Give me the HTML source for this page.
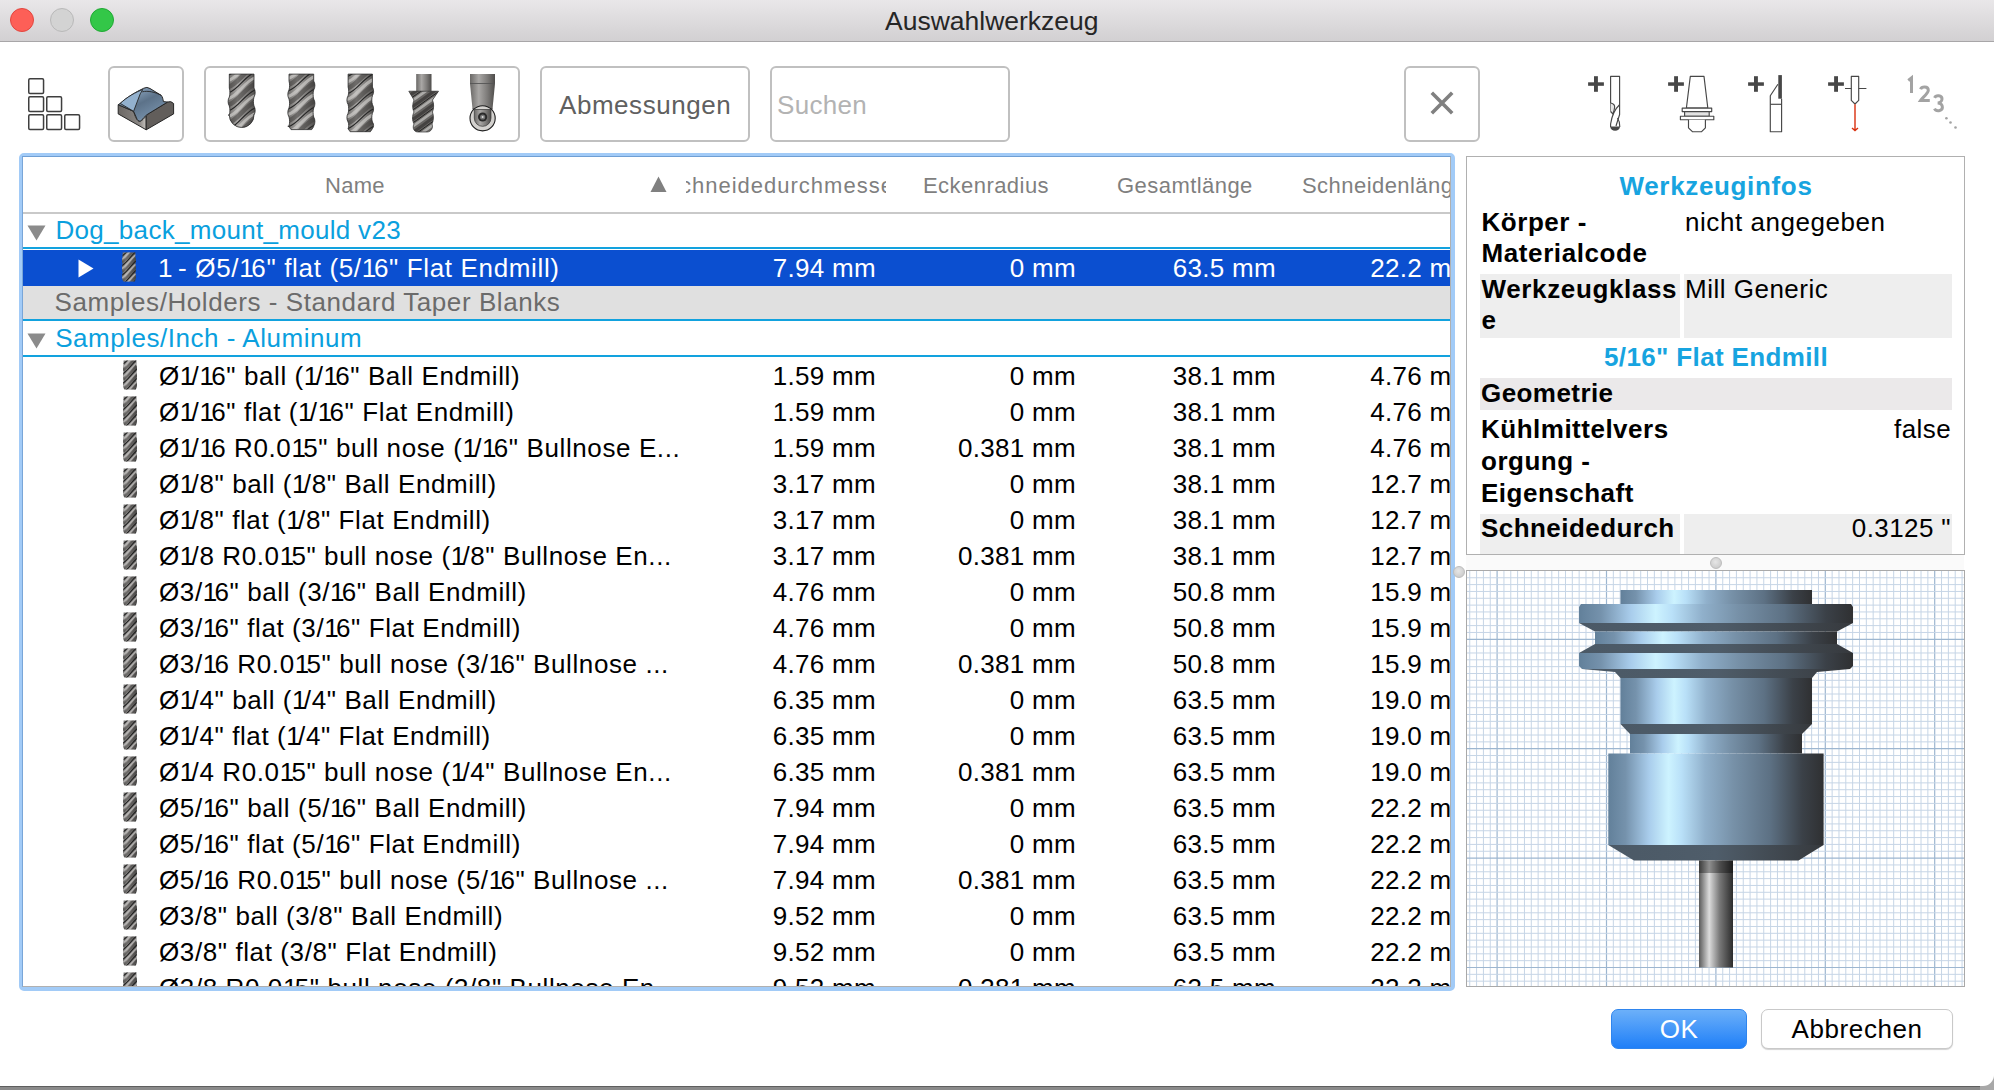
<!DOCTYPE html><html><head><meta charset="utf-8"><style>
*{margin:0;padding:0;box-sizing:border-box}
html,body{width:1994px;height:1090px;overflow:hidden;background:#fff;font-family:"Liberation Sans",sans-serif}
.a{position:absolute}
.t{position:absolute;font-size:26px;line-height:36px;height:36px;white-space:pre;color:#000}
.r{text-align:right}
.ti{position:absolute;width:14px;height:30px}
</style></head><body>
<svg width="0" height="0" style="position:absolute">
<defs>
<linearGradient id="gsteel" x1="0" x2="1" y1="0" y2="0">
<stop offset="0" stop-color="#62809a"/><stop offset="0.08" stop-color="#7592ac"/>
<stop offset="0.19" stop-color="#a9cdec"/><stop offset="0.28" stop-color="#cdf3ff"/>
<stop offset="0.34" stop-color="#b9e0f8"/><stop offset="0.45" stop-color="#90b0cb"/>
<stop offset="0.58" stop-color="#7791a8"/><stop offset="0.75" stop-color="#5d7184"/>
<stop offset="0.9" stop-color="#3b4148"/><stop offset="1" stop-color="#2f3032"/></linearGradient>
<linearGradient id="gdark" x1="0" x2="1" y1="0" y2="0">
<stop offset="0" stop-color="#4b5966"/><stop offset="0.5" stop-color="#4f5d6a"/><stop offset="1" stop-color="#36393d"/></linearGradient>
<linearGradient id="gshank" x1="0" x2="1" y1="0" y2="0">
<stop offset="0" stop-color="#5a5a5a"/><stop offset="0.3" stop-color="#dcdcdc"/><stop offset="0.6" stop-color="#7a7a7a"/><stop offset="1" stop-color="#2c2c2c"/></linearGradient>
<linearGradient id="gmetal" x1="0" x2="1" y1="0" y2="0">
<stop offset="0" stop-color="#505050"/><stop offset="0.35" stop-color="#b5b3b0"/><stop offset="0.65" stop-color="#7a7876"/><stop offset="1" stop-color="#3a3a3a"/></linearGradient>
<linearGradient id="gdr" x1="0" x2="1" y1="0" y2="0">
<stop offset="0" stop-color="#555"/><stop offset="0.3" stop-color="#999795"/><stop offset="0.65" stop-color="#7a7876"/><stop offset="1" stop-color="#454545"/></linearGradient>
<clipPath id="drclip"><path d="M0.6 0.5H13.4V5C14.2 7 14.2 10 13.4 12C14.2 14 14.2 17 13.4 21C14.2 23 14.2 26 13.4 28L12.5 29.6H1.5L0.6 28C-0.2 26 -0.2 23 0.6 21C-0.2 17 -0.2 14 0.6 12C-0.2 10 -0.2 7 0.6 5Z"/></clipPath>
<symbol id="drill" viewBox="0 0 14 30">
<g clip-path="url(#drclip)">
<rect x="-1" y="0" width="16" height="30" fill="url(#gdr)"/>
<path d="M0 7C5 4 9 -3 14 -7M0 16.5C5 13.5 9 6.5 14 2.5M0 26C5 23 9 16 14 12M0 35.5C5 32.5 9 25.5 14 21.5M0 45C5 42 9 35 14 31" stroke="#c4c2c0" stroke-width="1.5" fill="none" opacity="0.75"/>
<path d="M0 10.5C5 7.5 9 0.5 14 -3.5M0 20.0C5 17.0 9 10.0 14 6.0M0 29.5C5 26.5 9 19.5 14 15.5M0 39.0C5 36.0 9 29.0 14 25.0M0 48.5C5 45.5 9 38.5 14 34.5" stroke="#3a3836" stroke-width="2" fill="none" opacity="0.45"/>
<path d="M0 4C5 1 9 -6 14 -10M0 13.5C5 10.5 9 3.5 14 -0.5M0 23C5 20 9 13 14 9M0 32.5C5 29.5 9 22.5 14 18.5M0 42C5 39 9 32 14 28" stroke="#222" stroke-width="1.1" fill="none"/>
</g>
</symbol>
</defs></svg>

<div class="a" style="left:0;top:0;width:1994px;height:41px;background:linear-gradient(#e9e7e9,#d2d0d2)"></div>
<div class="a" style="left:0;top:41px;width:1994px;height:1px;background:#a8a6a8"></div>
<div class="a" style="left:10px;top:8px;width:24px;height:24px;border-radius:50%;background:#fd5f57;border:1px solid #e2463f"></div>
<div class="a" style="left:50px;top:8px;width:24px;height:24px;border-radius:50%;background:#d3d3d3;border:1px solid #b9b9b9"></div>
<div class="a" style="left:90px;top:8px;width:24px;height:24px;border-radius:50%;background:#33c748;border:1px solid #20a934"></div>
<div class="t" style="left:885px;top:3px;font-size:26.5px;color:#262626">Auswahlwerkzeug</div>

<div class="a" style="left:0;top:1086px;width:1994px;height:4px;background:#8a8a8a;border-top:1px solid #5e5e5e"></div>
<div class="a" style="left:1980px;top:1072px;width:14px;height:18px;background:#a8a8a8"></div>
<div class="a" style="left:1960px;top:1052px;width:34px;height:34px;background:#fff;border-bottom-right-radius:11px"></div>
<svg class="a" style="left:0;top:0" width="100" height="140"><rect x="28.75" y="78.75" width="14.8" height="14.8" rx="1.2" fill="none" stroke="#3f3f3f" stroke-width="1.5"/><rect x="28.75" y="96.75" width="14.8" height="14.8" rx="1.2" fill="none" stroke="#3f3f3f" stroke-width="1.5"/><rect x="46.75" y="96.75" width="14.8" height="14.8" rx="1.2" fill="none" stroke="#3f3f3f" stroke-width="1.5"/><rect x="28.75" y="114.75" width="14.8" height="14.8" rx="1.2" fill="none" stroke="#3f3f3f" stroke-width="1.5"/><rect x="46.75" y="114.75" width="14.8" height="14.8" rx="1.2" fill="none" stroke="#3f3f3f" stroke-width="1.5"/><rect x="64.75" y="114.75" width="14.8" height="14.8" rx="1.2" fill="none" stroke="#3f3f3f" stroke-width="1.5"/></svg>
<div class="a" style="left:108px;top:66px;width:76px;height:76px;border:2px solid #c0c0c0;border-radius:6px;background:#fff"></div>
<div class="a" style="left:204px;top:66px;width:316px;height:76px;border:2px solid #c0c0c0;border-radius:6px;background:#fff"></div>
<div class="a" style="left:540px;top:66px;width:210px;height:76px;border:2px solid #c0c0c0;border-radius:6px;background:#fff"></div>
<div class="a" style="left:770px;top:66px;width:240px;height:76px;border:2px solid #c0c0c0;border-radius:6px;background:#fff"></div>
<div class="a" style="left:1404px;top:66px;width:76px;height:76px;border:2px solid #c0c0c0;border-radius:6px;background:#fff"></div>
<div class="t" style="left:559px;top:87px;color:#606060;letter-spacing:0.55px">Abmessungen</div>
<div class="t" style="left:777px;top:87px;color:#b3b3b3;letter-spacing:0.3px">Suchen</div>
<svg class="a" style="left:1404px;top:66px" width="76" height="76"><path d="M27.8 26.8L48.2 47.2M48.2 26.8L27.8 47.2" stroke="#808080" stroke-width="3.6"/></svg>
<svg class="a" style="left:108px;top:66px" width="76" height="76" viewBox="0 0 76 76">
<defs><linearGradient id="gstk" x1="0.2" y1="0.1" x2="0.8" y2="0.9"><stop offset="0" stop-color="#8fa9c3"/><stop offset="0.45" stop-color="#5c7289"/><stop offset="0.8" stop-color="#6f88a1"/><stop offset="1" stop-color="#a9c2d9"/></linearGradient>
<linearGradient id="gfront" x1="0" y1="0" x2="1" y2="0"><stop offset="0" stop-color="#6b6764"/><stop offset="0.75" stop-color="#8a8683"/><stop offset="1" stop-color="#c9c6c2"/></linearGradient></defs>
<path d="M10.2 38.7 L25.6 45.3 C27 50 28.5 54.5 31.2 55.1 C34 55.5 36 52 38.2 50 L38.2 63.8 L10.2 47.9 Z" fill="url(#gfront)" stroke="#262626" stroke-width="1" stroke-linejoin="round"/>
<path d="M38.2 50 L41 47.4 L59.5 36.1 Q63 34.5 65.6 37.5 L65.6 47.9 L38.2 63.8 Z" fill="#625e5b" stroke="#262626" stroke-width="1" stroke-linejoin="round"/>
<path d="M10.2 38.7 L12.2 37.4 C19 31 28 26 35.8 22.2 Q38.9 20.5 42 22.5 L53.3 29.4 C54.5 31 55 33 55.4 35.6 L59.5 36.1 L41 47.4 C38 49 36.5 51 35.8 51.5 C34 54 33 55.3 31.2 55.1 C29.5 55 28.5 52 28.1 51 L25.6 45.3 Z" fill="url(#gstk)" stroke="#262626" stroke-width="1" stroke-linejoin="round"/>
<path d="M12.2 37.4 C19 31 28 26 34.8 23.5 L32.2 27.9 L25.6 45.3 Z" fill="#93b1ce" stroke="#262626" stroke-width="0.9" stroke-linejoin="round"/>
<path d="M34.3 25.8 C40 24.5 47 26 53.3 29.4" fill="none" stroke="#262626" stroke-width="0.9"/>
</svg>
<svg class="a" style="left:0;top:0" width="540" height="150"><defs><linearGradient id="gtool" x1="0" x2="1" y1="0" y2="0"><stop offset="0" stop-color="#6a6866"/><stop offset="0.35" stop-color="#a9a7a5"/><stop offset="0.7" stop-color="#7c7a78"/><stop offset="1" stop-color="#4e4c4a"/></linearGradient></defs><clipPath id="f1"><path d="M229.3 74.1H254.0V88C255.6 90.7 255.6 94.3 254.0 97.0C253.2 99.7 253.2 103.3 254.0 106.0C255.6 108.7 255.6 112.3 254.0 115.0C253.2 115.045 253.2 115.105 254.0 115.15A12.35 12.35 0 0 1 229.3 115.15C227.70000000000002 115.105 227.70000000000002 115.045 229.3 115.0C230.10000000000002 112.3 230.10000000000002 108.7 229.3 106.0C227.70000000000002 103.3 227.70000000000002 99.7 229.3 97.0C230.10000000000002 94.3 230.10000000000002 90.7 229.3 88Z"/></clipPath><path d="M229.3 74.1H254.0V88C255.6 90.7 255.6 94.3 254.0 97.0C253.2 99.7 253.2 103.3 254.0 106.0C255.6 108.7 255.6 112.3 254.0 115.0C253.2 115.045 253.2 115.105 254.0 115.15A12.35 12.35 0 0 1 229.3 115.15C227.70000000000002 115.105 227.70000000000002 115.045 229.3 115.0C230.10000000000002 112.3 230.10000000000002 108.7 229.3 106.0C227.70000000000002 103.3 227.70000000000002 99.7 229.3 97.0C230.10000000000002 94.3 230.10000000000002 90.7 229.3 88Z" fill="url(#gtool)"/><g clip-path="url(#f1)"><path d="M228.3 80.5C237.94500000000002 77.6 244.12 64.3 255.0 59.5" stroke="#cfcdcb" stroke-width="3" fill="none" opacity="0.7"/><path d="M228.3 87C237.94500000000002 84.1 244.12 70.8 255.0 66" stroke="#3e3c3a" stroke-width="4.5" fill="none" opacity="0.55"/><path d="M228.3 75C237.94500000000002 72.1 244.12 58.8 255.0 54" stroke="#262626" stroke-width="1.2" fill="none"/><path d="M228.3 98.5C237.94500000000002 95.6 244.12 82.3 255.0 77.5" stroke="#cfcdcb" stroke-width="3" fill="none" opacity="0.7"/><path d="M228.3 105C237.94500000000002 102.1 244.12 88.8 255.0 84" stroke="#3e3c3a" stroke-width="4.5" fill="none" opacity="0.55"/><path d="M228.3 93C237.94500000000002 90.1 244.12 76.8 255.0 72" stroke="#262626" stroke-width="1.2" fill="none"/><path d="M228.3 116.5C237.94500000000002 113.6 244.12 100.3 255.0 95.5" stroke="#cfcdcb" stroke-width="3" fill="none" opacity="0.7"/><path d="M228.3 123C237.94500000000002 120.1 244.12 106.8 255.0 102" stroke="#3e3c3a" stroke-width="4.5" fill="none" opacity="0.55"/><path d="M228.3 111C237.94500000000002 108.1 244.12 94.8 255.0 90" stroke="#262626" stroke-width="1.2" fill="none"/><path d="M228.3 134.5C237.94500000000002 131.6 244.12 118.3 255.0 113.5" stroke="#cfcdcb" stroke-width="3" fill="none" opacity="0.7"/><path d="M228.3 141C237.94500000000002 138.1 244.12 124.8 255.0 120" stroke="#3e3c3a" stroke-width="4.5" fill="none" opacity="0.55"/><path d="M228.3 129C237.94500000000002 126.1 244.12 112.8 255.0 108" stroke="#262626" stroke-width="1.2" fill="none"/><path d="M228.3 152.5C237.94500000000002 149.6 244.12 136.3 255.0 131.5" stroke="#cfcdcb" stroke-width="3" fill="none" opacity="0.7"/><path d="M228.3 159C237.94500000000002 156.1 244.12 142.8 255.0 138" stroke="#3e3c3a" stroke-width="4.5" fill="none" opacity="0.55"/><path d="M228.3 147C237.94500000000002 144.1 244.12 130.8 255.0 126" stroke="#262626" stroke-width="1.2" fill="none"/><path d="M228.3 170.5C237.94500000000002 167.6 244.12 154.3 255.0 149.5" stroke="#cfcdcb" stroke-width="3" fill="none" opacity="0.7"/><path d="M228.3 177C237.94500000000002 174.1 244.12 160.8 255.0 156" stroke="#3e3c3a" stroke-width="4.5" fill="none" opacity="0.55"/><path d="M228.3 165C237.94500000000002 162.1 244.12 148.8 255.0 144" stroke="#262626" stroke-width="1.2" fill="none"/></g><path d="M229.3 74.1H254.0V88C255.6 90.7 255.6 94.3 254.0 97.0C253.2 99.7 253.2 103.3 254.0 106.0C255.6 108.7 255.6 112.3 254.0 115.0C253.2 115.045 253.2 115.105 254.0 115.15A12.35 12.35 0 0 1 229.3 115.15C227.70000000000002 115.105 227.70000000000002 115.045 229.3 115.0C230.10000000000002 112.3 230.10000000000002 108.7 229.3 106.0C227.70000000000002 103.3 227.70000000000002 99.7 229.3 97.0C230.10000000000002 94.3 230.10000000000002 90.7 229.3 88Z" fill="none" stroke="#2e2e2e" stroke-width="0.8"/><clipPath id="f2"><path d="M289 74.1H313.7V81C315.3 83.7 315.3 87.3 313.7 90.0C312.9 92.7 312.9 96.3 313.7 99.0C315.3 101.7 315.3 105.3 313.7 108.0C312.9 110.7 312.9 114.3 313.7 117.0C315.3 119.7 315.3 123.3 313.7 126.0C312.9 126.17999999999999 312.9 126.42 313.7 126.6L311.7 129.6H291L289 126.6C287.4 126.42 287.4 126.17999999999999 289 126.0C289.8 123.3 289.8 119.7 289 117.0C287.4 114.3 287.4 110.7 289 108.0C289.8 105.3 289.8 101.7 289 99.0C287.4 96.3 287.4 92.7 289 90.0C289.8 87.3 289.8 83.7 289 81Z"/></clipPath><path d="M289 74.1H313.7V81C315.3 83.7 315.3 87.3 313.7 90.0C312.9 92.7 312.9 96.3 313.7 99.0C315.3 101.7 315.3 105.3 313.7 108.0C312.9 110.7 312.9 114.3 313.7 117.0C315.3 119.7 315.3 123.3 313.7 126.0C312.9 126.17999999999999 312.9 126.42 313.7 126.6L311.7 129.6H291L289 126.6C287.4 126.42 287.4 126.17999999999999 289 126.0C289.8 123.3 289.8 119.7 289 117.0C287.4 114.3 287.4 110.7 289 108.0C289.8 105.3 289.8 101.7 289 99.0C287.4 96.3 287.4 92.7 289 90.0C289.8 87.3 289.8 83.7 289 81Z" fill="url(#gtool)"/><g clip-path="url(#f2)"><path d="M288 78.5C297.645 75.7 303.82 63.1 314.7 58.5" stroke="#cfcdcb" stroke-width="3" fill="none" opacity="0.7"/><path d="M288 85C297.645 82.2 303.82 69.6 314.7 65" stroke="#3e3c3a" stroke-width="4.5" fill="none" opacity="0.55"/><path d="M288 73C297.645 70.2 303.82 57.6 314.7 53" stroke="#262626" stroke-width="1.2" fill="none"/><path d="M288 96.5C297.645 93.7 303.82 81.1 314.7 76.5" stroke="#cfcdcb" stroke-width="3" fill="none" opacity="0.7"/><path d="M288 103C297.645 100.2 303.82 87.6 314.7 83" stroke="#3e3c3a" stroke-width="4.5" fill="none" opacity="0.55"/><path d="M288 91C297.645 88.2 303.82 75.6 314.7 71" stroke="#262626" stroke-width="1.2" fill="none"/><path d="M288 114.5C297.645 111.7 303.82 99.1 314.7 94.5" stroke="#cfcdcb" stroke-width="3" fill="none" opacity="0.7"/><path d="M288 121C297.645 118.2 303.82 105.6 314.7 101" stroke="#3e3c3a" stroke-width="4.5" fill="none" opacity="0.55"/><path d="M288 109C297.645 106.2 303.82 93.6 314.7 89" stroke="#262626" stroke-width="1.2" fill="none"/><path d="M288 132.5C297.645 129.7 303.82 117.1 314.7 112.5" stroke="#cfcdcb" stroke-width="3" fill="none" opacity="0.7"/><path d="M288 139C297.645 136.2 303.82 123.6 314.7 119" stroke="#3e3c3a" stroke-width="4.5" fill="none" opacity="0.55"/><path d="M288 127C297.645 124.2 303.82 111.6 314.7 107" stroke="#262626" stroke-width="1.2" fill="none"/><path d="M288 150.5C297.645 147.7 303.82 135.1 314.7 130.5" stroke="#cfcdcb" stroke-width="3" fill="none" opacity="0.7"/><path d="M288 157C297.645 154.2 303.82 141.6 314.7 137" stroke="#3e3c3a" stroke-width="4.5" fill="none" opacity="0.55"/><path d="M288 145C297.645 142.2 303.82 129.6 314.7 125" stroke="#262626" stroke-width="1.2" fill="none"/><path d="M288 168.5C297.645 165.7 303.82 153.1 314.7 148.5" stroke="#cfcdcb" stroke-width="3" fill="none" opacity="0.7"/><path d="M288 175C297.645 172.2 303.82 159.6 314.7 155" stroke="#3e3c3a" stroke-width="4.5" fill="none" opacity="0.55"/><path d="M288 163C297.645 160.2 303.82 147.6 314.7 143" stroke="#262626" stroke-width="1.2" fill="none"/></g><path d="M289 74.1H313.7V81C315.3 83.7 315.3 87.3 313.7 90.0C312.9 92.7 312.9 96.3 313.7 99.0C315.3 101.7 315.3 105.3 313.7 108.0C312.9 110.7 312.9 114.3 313.7 117.0C315.3 119.7 315.3 123.3 313.7 126.0C312.9 126.17999999999999 312.9 126.42 313.7 126.6L311.7 129.6H291L289 126.6C287.4 126.42 287.4 126.17999999999999 289 126.0C289.8 123.3 289.8 119.7 289 117.0C287.4 114.3 287.4 110.7 289 108.0C289.8 105.3 289.8 101.7 289 99.0C287.4 96.3 287.4 92.7 289 90.0C289.8 87.3 289.8 83.7 289 81Z" fill="none" stroke="#2e2e2e" stroke-width="0.8"/><clipPath id="f3"><path d="M348.1 74.1H372.40000000000003V87C374.00000000000006 89.625 374.00000000000006 93.125 372.40000000000003 95.75C371.6 98.375 371.6 101.875 372.40000000000003 104.5C374.00000000000006 107.125 374.00000000000006 110.625 372.40000000000003 113.25C371.6 115.875 371.6 119.375 372.40000000000003 122.0C374.00000000000006 124.00999999999999 374.00000000000006 126.69 372.40000000000003 128.7L370.40000000000003 131.7H350.1L348.1 128.7C348.90000000000003 126.69 348.90000000000003 124.00999999999999 348.1 122.0C346.5 119.375 346.5 115.875 348.1 113.25C348.90000000000003 110.625 348.90000000000003 107.125 348.1 104.5C346.5 101.875 346.5 98.375 348.1 95.75C348.90000000000003 93.125 348.90000000000003 89.625 348.1 87Z"/></clipPath><path d="M348.1 74.1H372.40000000000003V87C374.00000000000006 89.625 374.00000000000006 93.125 372.40000000000003 95.75C371.6 98.375 371.6 101.875 372.40000000000003 104.5C374.00000000000006 107.125 374.00000000000006 110.625 372.40000000000003 113.25C371.6 115.875 371.6 119.375 372.40000000000003 122.0C374.00000000000006 124.00999999999999 374.00000000000006 126.69 372.40000000000003 128.7L370.40000000000003 131.7H350.1L348.1 128.7C348.90000000000003 126.69 348.90000000000003 124.00999999999999 348.1 122.0C346.5 119.375 346.5 115.875 348.1 113.25C348.90000000000003 110.625 348.90000000000003 107.125 348.1 104.5C346.5 101.875 346.5 98.375 348.1 95.75C348.90000000000003 93.125 348.90000000000003 89.625 348.1 87Z" fill="url(#gtool)"/><g clip-path="url(#f3)"><path d="M347.1 82.0C356.605 79.2 362.68 66.6 373.40000000000003 62.0" stroke="#cfcdcb" stroke-width="3" fill="none" opacity="0.7"/><path d="M347.1 88.5C356.605 85.7 362.68 73.1 373.40000000000003 68.5" stroke="#3e3c3a" stroke-width="4.5" fill="none" opacity="0.55"/><path d="M347.1 76.5C356.605 73.7 362.68 61.1 373.40000000000003 56.5" stroke="#262626" stroke-width="1.2" fill="none"/><path d="M347.1 99.5C356.605 96.7 362.68 84.1 373.40000000000003 79.5" stroke="#cfcdcb" stroke-width="3" fill="none" opacity="0.7"/><path d="M347.1 106.0C356.605 103.2 362.68 90.6 373.40000000000003 86.0" stroke="#3e3c3a" stroke-width="4.5" fill="none" opacity="0.55"/><path d="M347.1 94.0C356.605 91.2 362.68 78.6 373.40000000000003 74.0" stroke="#262626" stroke-width="1.2" fill="none"/><path d="M347.1 117.0C356.605 114.2 362.68 101.6 373.40000000000003 97.0" stroke="#cfcdcb" stroke-width="3" fill="none" opacity="0.7"/><path d="M347.1 123.5C356.605 120.7 362.68 108.1 373.40000000000003 103.5" stroke="#3e3c3a" stroke-width="4.5" fill="none" opacity="0.55"/><path d="M347.1 111.5C356.605 108.7 362.68 96.1 373.40000000000003 91.5" stroke="#262626" stroke-width="1.2" fill="none"/><path d="M347.1 134.5C356.605 131.7 362.68 119.1 373.40000000000003 114.5" stroke="#cfcdcb" stroke-width="3" fill="none" opacity="0.7"/><path d="M347.1 141.0C356.605 138.2 362.68 125.6 373.40000000000003 121.0" stroke="#3e3c3a" stroke-width="4.5" fill="none" opacity="0.55"/><path d="M347.1 129.0C356.605 126.2 362.68 113.6 373.40000000000003 109.0" stroke="#262626" stroke-width="1.2" fill="none"/><path d="M347.1 152.0C356.605 149.2 362.68 136.6 373.40000000000003 132.0" stroke="#cfcdcb" stroke-width="3" fill="none" opacity="0.7"/><path d="M347.1 158.5C356.605 155.7 362.68 143.1 373.40000000000003 138.5" stroke="#3e3c3a" stroke-width="4.5" fill="none" opacity="0.55"/><path d="M347.1 146.5C356.605 143.7 362.68 131.1 373.40000000000003 126.5" stroke="#262626" stroke-width="1.2" fill="none"/><path d="M347.1 169.5C356.605 166.7 362.68 154.1 373.40000000000003 149.5" stroke="#cfcdcb" stroke-width="3" fill="none" opacity="0.7"/><path d="M347.1 176.0C356.605 173.2 362.68 160.6 373.40000000000003 156.0" stroke="#3e3c3a" stroke-width="4.5" fill="none" opacity="0.55"/><path d="M347.1 164.0C356.605 161.2 362.68 148.6 373.40000000000003 144.0" stroke="#262626" stroke-width="1.2" fill="none"/></g><path d="M348.1 74.1H372.40000000000003V87C374.00000000000006 89.625 374.00000000000006 93.125 372.40000000000003 95.75C371.6 98.375 371.6 101.875 372.40000000000003 104.5C374.00000000000006 107.125 374.00000000000006 110.625 372.40000000000003 113.25C371.6 115.875 371.6 119.375 372.40000000000003 122.0C374.00000000000006 124.00999999999999 374.00000000000006 126.69 372.40000000000003 128.7L370.40000000000003 131.7H350.1L348.1 128.7C348.90000000000003 126.69 348.90000000000003 124.00999999999999 348.1 122.0C346.5 119.375 346.5 115.875 348.1 113.25C348.90000000000003 110.625 348.90000000000003 107.125 348.1 104.5C346.5 101.875 346.5 98.375 348.1 95.75C348.90000000000003 93.125 348.90000000000003 89.625 348.1 87Z" fill="none" stroke="#2e2e2e" stroke-width="0.8"/><rect x="416.2" y="74" width="15.3" height="18" fill="url(#gtool)"/><clipPath id="f4"><path d="M408.8 91.2H438.5L432.5 100C434 104 434 108 432.5 112C434 116 433.5 121 432 124C433.5 128 431 132 427 132H418C414 132 412 128 414 124C412 120 412 116 414 112C412 108 412.5 104 414 100Z"/></clipPath><path d="M408.8 91.2H438.5L432.5 100C434 104 434 108 432.5 112C434 116 433.5 121 432 124C433.5 128 431 132 427 132H418C414 132 412 128 414 124C412 120 412 116 414 112C412 108 412.5 104 414 100Z" fill="#676563"/><g clip-path="url(#f4)"><path d="M406 91C414 88 426 77 442 67" stroke="#bdbbb9" stroke-width="2.6" fill="none" opacity="0.8"/><path d="M406 97C414 94 426 83 442 73" stroke="#3c3a38" stroke-width="3.2" fill="none" opacity="0.8"/><path d="M406 87.5C414 84.5 426 73.5 442 63.5" stroke="#222" stroke-width="1" fill="none"/><path d="M406 104C414 101 426 90 442 80" stroke="#bdbbb9" stroke-width="2.6" fill="none" opacity="0.8"/><path d="M406 110C414 107 426 96 442 86" stroke="#3c3a38" stroke-width="3.2" fill="none" opacity="0.8"/><path d="M406 100.5C414 97.5 426 86.5 442 76.5" stroke="#222" stroke-width="1" fill="none"/><path d="M406 117C414 114 426 103 442 93" stroke="#bdbbb9" stroke-width="2.6" fill="none" opacity="0.8"/><path d="M406 123C414 120 426 109 442 99" stroke="#3c3a38" stroke-width="3.2" fill="none" opacity="0.8"/><path d="M406 113.5C414 110.5 426 99.5 442 89.5" stroke="#222" stroke-width="1" fill="none"/><path d="M406 130C414 127 426 116 442 106" stroke="#bdbbb9" stroke-width="2.6" fill="none" opacity="0.8"/><path d="M406 136C414 133 426 122 442 112" stroke="#3c3a38" stroke-width="3.2" fill="none" opacity="0.8"/><path d="M406 126.5C414 123.5 426 112.5 442 102.5" stroke="#222" stroke-width="1" fill="none"/><path d="M406 143C414 140 426 129 442 119" stroke="#bdbbb9" stroke-width="2.6" fill="none" opacity="0.8"/><path d="M406 149C414 146 426 135 442 125" stroke="#3c3a38" stroke-width="3.2" fill="none" opacity="0.8"/><path d="M406 139.5C414 136.5 426 125.5 442 115.5" stroke="#222" stroke-width="1" fill="none"/></g><path d="M408.8 91.2H438.5L432.5 100C434 104 434 108 432.5 112C434 116 433.5 121 432 124C433.5 128 431 132 427 132H418C414 132 412 128 414 124C412 120 412 116 414 112C412 108 412.5 104 414 100Z" fill="none" stroke="#333" stroke-width="0.7"/><path d="M470 74H495V83.5L492.5 109H472.5L470 83.5Z" fill="url(#gtool)"/><path d="M470 83.5H495" stroke="#555" stroke-width="0.9"/><path d="M472.5 109H492.5" stroke="#444" stroke-width="0.9"/><circle cx="482.6" cy="118.3" r="12.6" fill="#d3d1ce" stroke="#1e1e1e" stroke-width="1.1"/><path d="M474.3 109.5H491V118A8.35 8.35 0 0 1 474.3 118Z" fill="url(#gtool)" stroke="#333" stroke-width="0.7"/><circle cx="482.6" cy="117" r="4.6" fill="#2a2a2a"/><circle cx="482.6" cy="117" r="2.6" fill="#777"/><circle cx="482.6" cy="117" r="1" fill="#ddd"/></svg>
<svg class="a" style="left:1580px;top:70px" width="400" height="70" viewBox="0 0 400 70">
<g fill="#474747">
<rect x="8.1" y="12.3" width="15.8" height="3.5"/><rect x="14" y="6.2" width="3.9" height="15.6"/>
<rect x="88.1" y="12.3" width="15.8" height="3.5"/><rect x="94.1" y="6.2" width="3.9" height="15.6"/>
<rect x="168.1" y="12.3" width="15.8" height="3.5"/><rect x="174" y="6.2" width="3.9" height="15.6"/>
<rect x="248.1" y="12.3" width="15.8" height="3.5"/><rect x="254.1" y="6.2" width="3.9" height="15.6"/>
</g>
<g fill="none" stroke="#474747" stroke-width="1.15" stroke-linejoin="round">
<path d="M30.6 41.5V6.4H39.6V44.5L36 56"/>
<path d="M30.6 33C33 33.5 35 35 34.6 37.5C34.3 40 33.6 42 33 44L30.6 41.5" fill="#e6e6e6"/>
<path d="M39.3 35C35 39 32 45 30.6 54V57"/>
<path d="M37.5 48C39.5 51 40 54 39.8 57"/>
</g>
<path d="M30.2 56.5H40A4.9 4.3 0 0 1 30.2 56.5Z" fill="#474747"/>
<g fill="none" stroke="#474747" stroke-width="1.15" stroke-linejoin="round">
<path d="M110.3 6.4H124L127.8 38H106.4Z" fill="#fff"/>
<rect x="102.2" y="38.1" width="29.5" height="3.5" fill="#fff"/>
<rect x="104.6" y="41.6" width="24.6" height="4.6" fill="#e2e2e2"/>
<rect x="100.4" y="46.2" width="33.4" height="3.5" fill="#fff"/>
<path d="M108.5 49.7V57.8L112.4 61.7H121.6L125.4 57.8V49.7" fill="#fff"/>
<path d="M197.9 14.3L190.3 25.8V61.7H201.6V28.7"/>
<path d="M190.3 34.3H201.4"/>
<path d="M271.3 6.4H278.7V30.4L275 34L271.3 30.4Z" fill="#fff"/>
<path d="M265 18.5H271.3M278.7 18.5H286.4"/>
</g>
<rect x="198.3" y="5.1" width="3.6" height="23.6" fill="#474747"/>
<path d="M275 34.3V60.3M272 58L275 60.6L278 58" fill="none" stroke="#d9300f" stroke-width="1.4"/>
<g fill="none" stroke="#a3a3a3" stroke-width="3" stroke-linecap="butt" stroke-linejoin="miter">
<path d="M328.3 10.5L331.5 7.9V23"/>
<path d="M340.6 19.2C341.5 16.4 348.3 15.6 348.3 20.3C348.3 23.5 342.5 27.5 340.5 30.6H349.8"/>
<path d="M354.6 27.8C356 24.8 362 25.2 362 29.1C362 31.8 359.5 32.9 357.6 32.9C360.6 32.9 362.4 34.8 362.4 37.3C362.4 41.3 356 41.8 354.5 38.6"/>
</g>
<g fill="#a3a3a3"><circle cx="366.4" cy="48.3" r="1.3"/><circle cx="370.5" cy="52.5" r="1.3"/><circle cx="375.5" cy="57.5" r="1.3"/></g>
</svg>
<div class="a" style="left:19px;top:153px;width:1436px;height:838px;border:3px solid #a2cbf7;border-right-width:4px;border-bottom-width:4px;border-radius:5px"></div>
<div class="a" style="left:22px;top:156px;width:1429px;height:831px;border:1px solid #b0b0b0;border-top-color:#6f9fd4;border-left-color:#79a6d8"></div>
<div class="a" style="left:23px;top:157px;width:1427px;height:829px;overflow:hidden;background:#fff">
<div class="t" style="left:302px;top:10.5px;color:#7f7f7f;letter-spacing:0.3px;font-size:22px;font-weight:400;">Name</div>
<svg class="a" style="left:627px;top:19px" width="17" height="17"><path d="M8.5 0.5L16.5 16H0.5Z" fill="#808080"/></svg>
<div class="a" style="left:663px;top:10.5px;width:200px;height:36px;overflow:hidden"><div class="t" style="left:-6px;top:0;font-size:22px;color:#7f7f7f;letter-spacing:1.0px">chneidedurchmesser</div></div>
<div class="t" style="left:900px;top:10.5px;color:#7f7f7f;letter-spacing:0.45px;font-size:22px;font-weight:400;">Eckenradius</div>
<div class="t" style="left:1094px;top:10.5px;color:#7f7f7f;letter-spacing:0.45px;font-size:22px;font-weight:400;">Gesamtlänge</div>
<div class="t" style="left:1279px;top:10.5px;color:#7f7f7f;letter-spacing:0.45px;font-size:22px;font-weight:400;">Schneidenlänge</div>
<div class="a" style="left:0px;top:55px;width:1428px;height:2px;background:#c9c9c9"></div>
<svg class="a" style="left:4px;top:67.5px" width="19" height="16"><path d="M0.5 0.5H18.5L9.5 15.5Z" fill="#8b8b8b"/></svg>
<div class="t" style="left:32.5px;top:54.5px;color:#0aa0de;letter-spacing:0.3px;font-size:26px;font-weight:400;">Dog_back_mount_mould v23</div>
<div class="a" style="left:0px;top:90px;width:1428px;height:2px;background:#12a2de"></div>
<div class="a" style="left:0px;top:93px;width:1428px;height:36px;background:#0b4fd0"></div>
<svg class="a" style="left:55px;top:102px" width="16" height="19"><path d="M0.5 0.5L15.5 9.5L0.5 18.5Z" fill="#fff"/></svg>
<svg class="ti" viewBox="0 0 14 30" style="left:99px;top:95px"><use href="#drill"/></svg>
<div class="t" style="left:135px;top:93px;color:#fff;letter-spacing:0.65px"><span style="letter-spacing:-2.25px">1</span> - Ø5/<span style="letter-spacing:-2.25px">1</span>6&quot; flat (5/<span style="letter-spacing:-2.25px">1</span>6&quot; Flat Endmill)</div>
<div class="t" style="left:453px;width:400px;text-align:right;top:93px;color:#fff;letter-spacing:0.3px;font-size:26px;font-weight:400;">7.94 mm</div>
<div class="t" style="left:653px;width:400px;text-align:right;top:93px;color:#fff;letter-spacing:0.3px;font-size:26px;font-weight:400;">0 mm</div>
<div class="t" style="left:853px;width:400px;text-align:right;top:93px;color:#fff;letter-spacing:0.3px;font-size:26px;font-weight:400;">63.5 mm</div>
<div class="t" style="left:1050.5px;width:400px;text-align:right;top:93px;color:#fff;letter-spacing:0.3px;font-size:26px;font-weight:400;">22.2 mm</div>
<div class="a" style="left:0px;top:129px;width:1428px;height:33px;background:#e0e0e0"></div>
<div class="t" style="left:31.5px;top:126.60000000000002px;color:#6b6b6b;letter-spacing:0.57px;font-size:26px;font-weight:400;">Samples/Holders - Standard Taper Blanks</div>
<div class="a" style="left:0px;top:162px;width:1428px;height:2px;background:#12a2de"></div>
<svg class="a" style="left:4px;top:175.5px" width="19" height="16"><path d="M0.5 0.5H18.5L9.5 15.5Z" fill="#8b8b8b"/></svg>
<div class="t" style="left:32.2px;top:163.10000000000002px;color:#0aa0de;letter-spacing:0.53px;font-size:26px;font-weight:400;">Samples/Inch - Aluminum</div>
<div class="a" style="left:0px;top:198px;width:1428px;height:2px;background:#12a2de"></div>
<svg class="ti" viewBox="0 0 14 30" style="left:99.5px;top:202.5px"><use href="#drill"/></svg>
<div class="t" style="left:136px;top:200.8px;color:#000;letter-spacing:0.6px">Ø<span style="letter-spacing:-2.6999999999999997px">1</span>/<span style="letter-spacing:-2.6999999999999997px">1</span>6&quot; ball (<span style="letter-spacing:-2.6999999999999997px">1</span>/<span style="letter-spacing:-2.6999999999999997px">1</span>6&quot; Ball Endmill)</div>
<div class="t" style="left:453px;width:400px;text-align:right;top:200.8px;color:#000;letter-spacing:0.3px;font-size:26px;font-weight:400;">1.59 mm</div>
<div class="t" style="left:653px;width:400px;text-align:right;top:200.8px;color:#000;letter-spacing:0.3px;font-size:26px;font-weight:400;">0 mm</div>
<div class="t" style="left:853px;width:400px;text-align:right;top:200.8px;color:#000;letter-spacing:0.3px;font-size:26px;font-weight:400;">38.1 mm</div>
<div class="t" style="left:1050.5px;width:400px;text-align:right;top:200.8px;color:#000;letter-spacing:0.3px;font-size:26px;font-weight:400;">4.76 mm</div>
<svg class="ti" viewBox="0 0 14 30" style="left:99.5px;top:238.5px"><use href="#drill"/></svg>
<div class="t" style="left:136px;top:236.8px;color:#000;letter-spacing:0.6px">Ø<span style="letter-spacing:-2.6999999999999997px">1</span>/<span style="letter-spacing:-2.6999999999999997px">1</span>6&quot; flat (<span style="letter-spacing:-2.6999999999999997px">1</span>/<span style="letter-spacing:-2.6999999999999997px">1</span>6&quot; Flat Endmill)</div>
<div class="t" style="left:453px;width:400px;text-align:right;top:236.8px;color:#000;letter-spacing:0.3px;font-size:26px;font-weight:400;">1.59 mm</div>
<div class="t" style="left:653px;width:400px;text-align:right;top:236.8px;color:#000;letter-spacing:0.3px;font-size:26px;font-weight:400;">0 mm</div>
<div class="t" style="left:853px;width:400px;text-align:right;top:236.8px;color:#000;letter-spacing:0.3px;font-size:26px;font-weight:400;">38.1 mm</div>
<div class="t" style="left:1050.5px;width:400px;text-align:right;top:236.8px;color:#000;letter-spacing:0.3px;font-size:26px;font-weight:400;">4.76 mm</div>
<svg class="ti" viewBox="0 0 14 30" style="left:99.5px;top:274.5px"><use href="#drill"/></svg>
<div class="t" style="left:136px;top:272.8px;color:#000;letter-spacing:0.6px">Ø<span style="letter-spacing:-2.6999999999999997px">1</span>/<span style="letter-spacing:-2.6999999999999997px">1</span>6 R0.0<span style="letter-spacing:-2.6999999999999997px">1</span>5&quot; bull nose (<span style="letter-spacing:-2.6999999999999997px">1</span>/<span style="letter-spacing:-2.6999999999999997px">1</span>6&quot; Bullnose E...</div>
<div class="t" style="left:453px;width:400px;text-align:right;top:272.8px;color:#000;letter-spacing:0.3px;font-size:26px;font-weight:400;">1.59 mm</div>
<div class="t" style="left:653px;width:400px;text-align:right;top:272.8px;color:#000;letter-spacing:0.3px;font-size:26px;font-weight:400;">0.381 mm</div>
<div class="t" style="left:853px;width:400px;text-align:right;top:272.8px;color:#000;letter-spacing:0.3px;font-size:26px;font-weight:400;">38.1 mm</div>
<div class="t" style="left:1050.5px;width:400px;text-align:right;top:272.8px;color:#000;letter-spacing:0.3px;font-size:26px;font-weight:400;">4.76 mm</div>
<svg class="ti" viewBox="0 0 14 30" style="left:99.5px;top:310.5px"><use href="#drill"/></svg>
<div class="t" style="left:136px;top:308.8px;color:#000;letter-spacing:0.6px">Ø<span style="letter-spacing:-2.6999999999999997px">1</span>/8&quot; ball (<span style="letter-spacing:-2.6999999999999997px">1</span>/8&quot; Ball Endmill)</div>
<div class="t" style="left:453px;width:400px;text-align:right;top:308.8px;color:#000;letter-spacing:0.3px;font-size:26px;font-weight:400;">3.17 mm</div>
<div class="t" style="left:653px;width:400px;text-align:right;top:308.8px;color:#000;letter-spacing:0.3px;font-size:26px;font-weight:400;">0 mm</div>
<div class="t" style="left:853px;width:400px;text-align:right;top:308.8px;color:#000;letter-spacing:0.3px;font-size:26px;font-weight:400;">38.1 mm</div>
<div class="t" style="left:1050.5px;width:400px;text-align:right;top:308.8px;color:#000;letter-spacing:0.3px;font-size:26px;font-weight:400;">12.7 mm</div>
<svg class="ti" viewBox="0 0 14 30" style="left:99.5px;top:346.5px"><use href="#drill"/></svg>
<div class="t" style="left:136px;top:344.79999999999995px;color:#000;letter-spacing:0.6px">Ø<span style="letter-spacing:-2.6999999999999997px">1</span>/8&quot; flat (<span style="letter-spacing:-2.6999999999999997px">1</span>/8&quot; Flat Endmill)</div>
<div class="t" style="left:453px;width:400px;text-align:right;top:344.79999999999995px;color:#000;letter-spacing:0.3px;font-size:26px;font-weight:400;">3.17 mm</div>
<div class="t" style="left:653px;width:400px;text-align:right;top:344.79999999999995px;color:#000;letter-spacing:0.3px;font-size:26px;font-weight:400;">0 mm</div>
<div class="t" style="left:853px;width:400px;text-align:right;top:344.79999999999995px;color:#000;letter-spacing:0.3px;font-size:26px;font-weight:400;">38.1 mm</div>
<div class="t" style="left:1050.5px;width:400px;text-align:right;top:344.79999999999995px;color:#000;letter-spacing:0.3px;font-size:26px;font-weight:400;">12.7 mm</div>
<svg class="ti" viewBox="0 0 14 30" style="left:99.5px;top:382.5px"><use href="#drill"/></svg>
<div class="t" style="left:136px;top:380.79999999999995px;color:#000;letter-spacing:0.6px">Ø<span style="letter-spacing:-2.6999999999999997px">1</span>/8 R0.0<span style="letter-spacing:-2.6999999999999997px">1</span>5&quot; bull nose (<span style="letter-spacing:-2.6999999999999997px">1</span>/8&quot; Bullnose En...</div>
<div class="t" style="left:453px;width:400px;text-align:right;top:380.79999999999995px;color:#000;letter-spacing:0.3px;font-size:26px;font-weight:400;">3.17 mm</div>
<div class="t" style="left:653px;width:400px;text-align:right;top:380.79999999999995px;color:#000;letter-spacing:0.3px;font-size:26px;font-weight:400;">0.381 mm</div>
<div class="t" style="left:853px;width:400px;text-align:right;top:380.79999999999995px;color:#000;letter-spacing:0.3px;font-size:26px;font-weight:400;">38.1 mm</div>
<div class="t" style="left:1050.5px;width:400px;text-align:right;top:380.79999999999995px;color:#000;letter-spacing:0.3px;font-size:26px;font-weight:400;">12.7 mm</div>
<svg class="ti" viewBox="0 0 14 30" style="left:99.5px;top:418.5px"><use href="#drill"/></svg>
<div class="t" style="left:136px;top:416.79999999999995px;color:#000;letter-spacing:0.6px">Ø3/<span style="letter-spacing:-2.6999999999999997px">1</span>6&quot; ball (3/<span style="letter-spacing:-2.6999999999999997px">1</span>6&quot; Ball Endmill)</div>
<div class="t" style="left:453px;width:400px;text-align:right;top:416.79999999999995px;color:#000;letter-spacing:0.3px;font-size:26px;font-weight:400;">4.76 mm</div>
<div class="t" style="left:653px;width:400px;text-align:right;top:416.79999999999995px;color:#000;letter-spacing:0.3px;font-size:26px;font-weight:400;">0 mm</div>
<div class="t" style="left:853px;width:400px;text-align:right;top:416.79999999999995px;color:#000;letter-spacing:0.3px;font-size:26px;font-weight:400;">50.8 mm</div>
<div class="t" style="left:1050.5px;width:400px;text-align:right;top:416.79999999999995px;color:#000;letter-spacing:0.3px;font-size:26px;font-weight:400;">15.9 mm</div>
<svg class="ti" viewBox="0 0 14 30" style="left:99.5px;top:454.5px"><use href="#drill"/></svg>
<div class="t" style="left:136px;top:452.79999999999995px;color:#000;letter-spacing:0.6px">Ø3/<span style="letter-spacing:-2.6999999999999997px">1</span>6&quot; flat (3/<span style="letter-spacing:-2.6999999999999997px">1</span>6&quot; Flat Endmill)</div>
<div class="t" style="left:453px;width:400px;text-align:right;top:452.79999999999995px;color:#000;letter-spacing:0.3px;font-size:26px;font-weight:400;">4.76 mm</div>
<div class="t" style="left:653px;width:400px;text-align:right;top:452.79999999999995px;color:#000;letter-spacing:0.3px;font-size:26px;font-weight:400;">0 mm</div>
<div class="t" style="left:853px;width:400px;text-align:right;top:452.79999999999995px;color:#000;letter-spacing:0.3px;font-size:26px;font-weight:400;">50.8 mm</div>
<div class="t" style="left:1050.5px;width:400px;text-align:right;top:452.79999999999995px;color:#000;letter-spacing:0.3px;font-size:26px;font-weight:400;">15.9 mm</div>
<svg class="ti" viewBox="0 0 14 30" style="left:99.5px;top:490.5px"><use href="#drill"/></svg>
<div class="t" style="left:136px;top:488.79999999999995px;color:#000;letter-spacing:0.6px">Ø3/<span style="letter-spacing:-2.6999999999999997px">1</span>6 R0.0<span style="letter-spacing:-2.6999999999999997px">1</span>5&quot; bull nose (3/<span style="letter-spacing:-2.6999999999999997px">1</span>6&quot; Bullnose ...</div>
<div class="t" style="left:453px;width:400px;text-align:right;top:488.79999999999995px;color:#000;letter-spacing:0.3px;font-size:26px;font-weight:400;">4.76 mm</div>
<div class="t" style="left:653px;width:400px;text-align:right;top:488.79999999999995px;color:#000;letter-spacing:0.3px;font-size:26px;font-weight:400;">0.381 mm</div>
<div class="t" style="left:853px;width:400px;text-align:right;top:488.79999999999995px;color:#000;letter-spacing:0.3px;font-size:26px;font-weight:400;">50.8 mm</div>
<div class="t" style="left:1050.5px;width:400px;text-align:right;top:488.79999999999995px;color:#000;letter-spacing:0.3px;font-size:26px;font-weight:400;">15.9 mm</div>
<svg class="ti" viewBox="0 0 14 30" style="left:99.5px;top:526.5px"><use href="#drill"/></svg>
<div class="t" style="left:136px;top:524.8px;color:#000;letter-spacing:0.6px">Ø<span style="letter-spacing:-2.6999999999999997px">1</span>/4&quot; ball (<span style="letter-spacing:-2.6999999999999997px">1</span>/4&quot; Ball Endmill)</div>
<div class="t" style="left:453px;width:400px;text-align:right;top:524.8px;color:#000;letter-spacing:0.3px;font-size:26px;font-weight:400;">6.35 mm</div>
<div class="t" style="left:653px;width:400px;text-align:right;top:524.8px;color:#000;letter-spacing:0.3px;font-size:26px;font-weight:400;">0 mm</div>
<div class="t" style="left:853px;width:400px;text-align:right;top:524.8px;color:#000;letter-spacing:0.3px;font-size:26px;font-weight:400;">63.5 mm</div>
<div class="t" style="left:1050.5px;width:400px;text-align:right;top:524.8px;color:#000;letter-spacing:0.3px;font-size:26px;font-weight:400;">19.0 mm</div>
<svg class="ti" viewBox="0 0 14 30" style="left:99.5px;top:562.5px"><use href="#drill"/></svg>
<div class="t" style="left:136px;top:560.8px;color:#000;letter-spacing:0.6px">Ø<span style="letter-spacing:-2.6999999999999997px">1</span>/4&quot; flat (<span style="letter-spacing:-2.6999999999999997px">1</span>/4&quot; Flat Endmill)</div>
<div class="t" style="left:453px;width:400px;text-align:right;top:560.8px;color:#000;letter-spacing:0.3px;font-size:26px;font-weight:400;">6.35 mm</div>
<div class="t" style="left:653px;width:400px;text-align:right;top:560.8px;color:#000;letter-spacing:0.3px;font-size:26px;font-weight:400;">0 mm</div>
<div class="t" style="left:853px;width:400px;text-align:right;top:560.8px;color:#000;letter-spacing:0.3px;font-size:26px;font-weight:400;">63.5 mm</div>
<div class="t" style="left:1050.5px;width:400px;text-align:right;top:560.8px;color:#000;letter-spacing:0.3px;font-size:26px;font-weight:400;">19.0 mm</div>
<svg class="ti" viewBox="0 0 14 30" style="left:99.5px;top:598.5px"><use href="#drill"/></svg>
<div class="t" style="left:136px;top:596.8px;color:#000;letter-spacing:0.6px">Ø<span style="letter-spacing:-2.6999999999999997px">1</span>/4 R0.0<span style="letter-spacing:-2.6999999999999997px">1</span>5&quot; bull nose (<span style="letter-spacing:-2.6999999999999997px">1</span>/4&quot; Bullnose En...</div>
<div class="t" style="left:453px;width:400px;text-align:right;top:596.8px;color:#000;letter-spacing:0.3px;font-size:26px;font-weight:400;">6.35 mm</div>
<div class="t" style="left:653px;width:400px;text-align:right;top:596.8px;color:#000;letter-spacing:0.3px;font-size:26px;font-weight:400;">0.381 mm</div>
<div class="t" style="left:853px;width:400px;text-align:right;top:596.8px;color:#000;letter-spacing:0.3px;font-size:26px;font-weight:400;">63.5 mm</div>
<div class="t" style="left:1050.5px;width:400px;text-align:right;top:596.8px;color:#000;letter-spacing:0.3px;font-size:26px;font-weight:400;">19.0 mm</div>
<svg class="ti" viewBox="0 0 14 30" style="left:99.5px;top:634.5px"><use href="#drill"/></svg>
<div class="t" style="left:136px;top:632.8px;color:#000;letter-spacing:0.6px">Ø5/<span style="letter-spacing:-2.6999999999999997px">1</span>6&quot; ball (5/<span style="letter-spacing:-2.6999999999999997px">1</span>6&quot; Ball Endmill)</div>
<div class="t" style="left:453px;width:400px;text-align:right;top:632.8px;color:#000;letter-spacing:0.3px;font-size:26px;font-weight:400;">7.94 mm</div>
<div class="t" style="left:653px;width:400px;text-align:right;top:632.8px;color:#000;letter-spacing:0.3px;font-size:26px;font-weight:400;">0 mm</div>
<div class="t" style="left:853px;width:400px;text-align:right;top:632.8px;color:#000;letter-spacing:0.3px;font-size:26px;font-weight:400;">63.5 mm</div>
<div class="t" style="left:1050.5px;width:400px;text-align:right;top:632.8px;color:#000;letter-spacing:0.3px;font-size:26px;font-weight:400;">22.2 mm</div>
<svg class="ti" viewBox="0 0 14 30" style="left:99.5px;top:670.5px"><use href="#drill"/></svg>
<div class="t" style="left:136px;top:668.8px;color:#000;letter-spacing:0.6px">Ø5/<span style="letter-spacing:-2.6999999999999997px">1</span>6&quot; flat (5/<span style="letter-spacing:-2.6999999999999997px">1</span>6&quot; Flat Endmill)</div>
<div class="t" style="left:453px;width:400px;text-align:right;top:668.8px;color:#000;letter-spacing:0.3px;font-size:26px;font-weight:400;">7.94 mm</div>
<div class="t" style="left:653px;width:400px;text-align:right;top:668.8px;color:#000;letter-spacing:0.3px;font-size:26px;font-weight:400;">0 mm</div>
<div class="t" style="left:853px;width:400px;text-align:right;top:668.8px;color:#000;letter-spacing:0.3px;font-size:26px;font-weight:400;">63.5 mm</div>
<div class="t" style="left:1050.5px;width:400px;text-align:right;top:668.8px;color:#000;letter-spacing:0.3px;font-size:26px;font-weight:400;">22.2 mm</div>
<svg class="ti" viewBox="0 0 14 30" style="left:99.5px;top:706.5px"><use href="#drill"/></svg>
<div class="t" style="left:136px;top:704.8px;color:#000;letter-spacing:0.6px">Ø5/<span style="letter-spacing:-2.6999999999999997px">1</span>6 R0.0<span style="letter-spacing:-2.6999999999999997px">1</span>5&quot; bull nose (5/<span style="letter-spacing:-2.6999999999999997px">1</span>6&quot; Bullnose ...</div>
<div class="t" style="left:453px;width:400px;text-align:right;top:704.8px;color:#000;letter-spacing:0.3px;font-size:26px;font-weight:400;">7.94 mm</div>
<div class="t" style="left:653px;width:400px;text-align:right;top:704.8px;color:#000;letter-spacing:0.3px;font-size:26px;font-weight:400;">0.381 mm</div>
<div class="t" style="left:853px;width:400px;text-align:right;top:704.8px;color:#000;letter-spacing:0.3px;font-size:26px;font-weight:400;">63.5 mm</div>
<div class="t" style="left:1050.5px;width:400px;text-align:right;top:704.8px;color:#000;letter-spacing:0.3px;font-size:26px;font-weight:400;">22.2 mm</div>
<svg class="ti" viewBox="0 0 14 30" style="left:99.5px;top:742.5px"><use href="#drill"/></svg>
<div class="t" style="left:136px;top:740.8px;color:#000;letter-spacing:0.6px">Ø3/8&quot; ball (3/8&quot; Ball Endmill)</div>
<div class="t" style="left:453px;width:400px;text-align:right;top:740.8px;color:#000;letter-spacing:0.3px;font-size:26px;font-weight:400;">9.52 mm</div>
<div class="t" style="left:653px;width:400px;text-align:right;top:740.8px;color:#000;letter-spacing:0.3px;font-size:26px;font-weight:400;">0 mm</div>
<div class="t" style="left:853px;width:400px;text-align:right;top:740.8px;color:#000;letter-spacing:0.3px;font-size:26px;font-weight:400;">63.5 mm</div>
<div class="t" style="left:1050.5px;width:400px;text-align:right;top:740.8px;color:#000;letter-spacing:0.3px;font-size:26px;font-weight:400;">22.2 mm</div>
<svg class="ti" viewBox="0 0 14 30" style="left:99.5px;top:778.5px"><use href="#drill"/></svg>
<div class="t" style="left:136px;top:776.8px;color:#000;letter-spacing:0.6px">Ø3/8&quot; flat (3/8&quot; Flat Endmill)</div>
<div class="t" style="left:453px;width:400px;text-align:right;top:776.8px;color:#000;letter-spacing:0.3px;font-size:26px;font-weight:400;">9.52 mm</div>
<div class="t" style="left:653px;width:400px;text-align:right;top:776.8px;color:#000;letter-spacing:0.3px;font-size:26px;font-weight:400;">0 mm</div>
<div class="t" style="left:853px;width:400px;text-align:right;top:776.8px;color:#000;letter-spacing:0.3px;font-size:26px;font-weight:400;">63.5 mm</div>
<div class="t" style="left:1050.5px;width:400px;text-align:right;top:776.8px;color:#000;letter-spacing:0.3px;font-size:26px;font-weight:400;">22.2 mm</div>
<svg class="ti" viewBox="0 0 14 30" style="left:99.5px;top:814.5px"><use href="#drill"/></svg>
<div class="t" style="left:136px;top:812.8px;color:#000;letter-spacing:0.6px">Ø3/8 R0.0<span style="letter-spacing:-2.6999999999999997px">1</span>5&quot; bull nose (3/8&quot; Bullnose En...</div>
<div class="t" style="left:453px;width:400px;text-align:right;top:812.8px;color:#000;letter-spacing:0.3px;font-size:26px;font-weight:400;">9.52 mm</div>
<div class="t" style="left:653px;width:400px;text-align:right;top:812.8px;color:#000;letter-spacing:0.3px;font-size:26px;font-weight:400;">0.381 mm</div>
<div class="t" style="left:853px;width:400px;text-align:right;top:812.8px;color:#000;letter-spacing:0.3px;font-size:26px;font-weight:400;">63.5 mm</div>
<div class="t" style="left:1050.5px;width:400px;text-align:right;top:812.8px;color:#000;letter-spacing:0.3px;font-size:26px;font-weight:400;">22.2 mm</div>
</div>
<div class="a" style="left:1466px;top:156px;width:499px;height:399px;border:1px solid #b0b0b0;background:#fff"></div>
<div class="a" style="left:1480px;top:274px;width:200px;height:64px;background:#eeeeee"></div>
<div class="a" style="left:1684px;top:274px;width:268px;height:64px;background:#eeeeee"></div>
<div class="a" style="left:1480px;top:378px;width:472px;height:32px;background:#ebe9ea"></div>
<div class="a" style="left:1480px;top:514px;width:200px;height:40px;background:#eeeeee"></div>
<div class="a" style="left:1684px;top:514px;width:268px;height:40px;background:#eeeeee"></div>
<div class="t" style="left:1619.5px;top:167.6px;color:#17a4e0;letter-spacing:0.66px;font-weight:700;font-size:26px;">Werkzeuginfos</div>
<div class="t" style="left:1481.5px;top:203.7px;color:#000;letter-spacing:0.55px;font-weight:700;font-size:26px;">Körper -</div>
<div class="t" style="left:1481.5px;top:235.3px;color:#000;letter-spacing:0.6px;font-weight:700;font-size:26px;">Materialcode</div>
<div class="t" style="left:1685px;top:203.7px;color:#000;letter-spacing:0.55px;font-weight:400;font-size:26px;">nicht angegeben</div>
<div class="t" style="left:1481.5px;top:270.7px;color:#000;letter-spacing:0.64px;font-weight:700;font-size:26px;">Werkzeugklass</div>
<div class="t" style="left:1481.5px;top:302px;color:#000;letter-spacing:0.5px;font-weight:700;font-size:26px;">e</div>
<div class="t" style="left:1685px;top:270.7px;color:#000;letter-spacing:0.5px;font-weight:400;font-size:26px;">Mill Generic</div>
<div class="t" style="left:1604px;top:339.2px;color:#17a4e0;letter-spacing:0.36px;font-weight:700;font-size:26px;">5/16&quot; Flat Endmill</div>
<div class="t" style="left:1481px;top:374.5px;color:#000;letter-spacing:0.43px;font-weight:700;font-size:26px;">Geometrie</div>
<div class="t" style="left:1481px;top:411.4px;color:#000;letter-spacing:0.5px;font-weight:700;font-size:26px;">Kühlmittelvers</div>
<div class="t" style="left:1481px;top:442.5px;color:#000;letter-spacing:0.5px;font-weight:700;font-size:26px;">orgung -</div>
<div class="t" style="left:1481px;top:474.8px;color:#000;letter-spacing:0.5px;font-weight:700;font-size:26px;">Eigenschaft</div>
<div class="t" style="left:1451px;width:500px;text-align:right;top:411.4px;color:#000;letter-spacing:0.4px;font-weight:400;font-size:26px;">false</div>
<div class="t" style="left:1481px;top:510.29999999999995px;color:#000;letter-spacing:0.45px;font-weight:700;font-size:26px;">Schneidedurch</div>
<div class="t" style="left:1451px;width:500px;text-align:right;top:510.29999999999995px;color:#000;letter-spacing:0.4px;font-weight:400;font-size:26px;">0.3125 &quot;</div>
<div class="a" style="left:1466px;top:555px;width:498px;height:15px;background:#fafafa"></div>
<div class="a" style="left:1710px;top:557px;width:12px;height:12px;border-radius:50%;background:radial-gradient(circle at 45% 40%,#e6e6e6,#c4c4c4);border:1px solid #bdbdbd"></div>
<div class="a" style="left:1453px;top:566px;width:12px;height:12px;border-radius:50%;background:radial-gradient(circle at 45% 40%,#e6e6e6,#c4c4c4);border:1px solid #bdbdbd"></div>
<svg class="a" style="left:1466px;top:570px" width="499" height="417"><rect x="0" y="0" width="499" height="417" fill="#fff"/><line x1="3.75" y1="0" x2="3.75" y2="417" stroke="#c6d5e6" stroke-width="1"/><line x1="10.59" y1="0" x2="10.59" y2="417" stroke="#c6d5e6" stroke-width="1"/><line x1="17.43" y1="0" x2="17.43" y2="417" stroke="#c6d5e6" stroke-width="1"/><line x1="24.26" y1="0" x2="24.26" y2="417" stroke="#c6d5e6" stroke-width="1"/><line x1="31.10" y1="0" x2="31.10" y2="417" stroke="#9db6d0" stroke-width="1.2"/><line x1="37.94" y1="0" x2="37.94" y2="417" stroke="#c6d5e6" stroke-width="1"/><line x1="44.78" y1="0" x2="44.78" y2="417" stroke="#c6d5e6" stroke-width="1"/><line x1="51.61" y1="0" x2="51.61" y2="417" stroke="#c6d5e6" stroke-width="1"/><line x1="58.45" y1="0" x2="58.45" y2="417" stroke="#c6d5e6" stroke-width="1"/><line x1="65.29" y1="0" x2="65.29" y2="417" stroke="#c6d5e6" stroke-width="1"/><line x1="72.13" y1="0" x2="72.13" y2="417" stroke="#c6d5e6" stroke-width="1"/><line x1="78.96" y1="0" x2="78.96" y2="417" stroke="#c6d5e6" stroke-width="1"/><line x1="85.80" y1="0" x2="85.80" y2="417" stroke="#c6d5e6" stroke-width="1"/><line x1="92.64" y1="0" x2="92.64" y2="417" stroke="#c6d5e6" stroke-width="1"/><line x1="99.48" y1="0" x2="99.48" y2="417" stroke="#c6d5e6" stroke-width="1"/><line x1="106.31" y1="0" x2="106.31" y2="417" stroke="#c6d5e6" stroke-width="1"/><line x1="113.15" y1="0" x2="113.15" y2="417" stroke="#c6d5e6" stroke-width="1"/><line x1="119.99" y1="0" x2="119.99" y2="417" stroke="#c6d5e6" stroke-width="1"/><line x1="126.83" y1="0" x2="126.83" y2="417" stroke="#c6d5e6" stroke-width="1"/><line x1="133.66" y1="0" x2="133.66" y2="417" stroke="#c6d5e6" stroke-width="1"/><line x1="140.50" y1="0" x2="140.50" y2="417" stroke="#9db6d0" stroke-width="1.2"/><line x1="147.34" y1="0" x2="147.34" y2="417" stroke="#c6d5e6" stroke-width="1"/><line x1="154.18" y1="0" x2="154.18" y2="417" stroke="#c6d5e6" stroke-width="1"/><line x1="161.01" y1="0" x2="161.01" y2="417" stroke="#c6d5e6" stroke-width="1"/><line x1="167.85" y1="0" x2="167.85" y2="417" stroke="#c6d5e6" stroke-width="1"/><line x1="174.69" y1="0" x2="174.69" y2="417" stroke="#c6d5e6" stroke-width="1"/><line x1="181.53" y1="0" x2="181.53" y2="417" stroke="#c6d5e6" stroke-width="1"/><line x1="188.36" y1="0" x2="188.36" y2="417" stroke="#c6d5e6" stroke-width="1"/><line x1="195.20" y1="0" x2="195.20" y2="417" stroke="#c6d5e6" stroke-width="1"/><line x1="202.04" y1="0" x2="202.04" y2="417" stroke="#c6d5e6" stroke-width="1"/><line x1="208.88" y1="0" x2="208.88" y2="417" stroke="#c6d5e6" stroke-width="1"/><line x1="215.71" y1="0" x2="215.71" y2="417" stroke="#c6d5e6" stroke-width="1"/><line x1="222.55" y1="0" x2="222.55" y2="417" stroke="#c6d5e6" stroke-width="1"/><line x1="229.39" y1="0" x2="229.39" y2="417" stroke="#c6d5e6" stroke-width="1"/><line x1="236.23" y1="0" x2="236.23" y2="417" stroke="#c6d5e6" stroke-width="1"/><line x1="243.06" y1="0" x2="243.06" y2="417" stroke="#c6d5e6" stroke-width="1"/><line x1="249.90" y1="0" x2="249.90" y2="417" stroke="#9db6d0" stroke-width="1.2"/><line x1="256.74" y1="0" x2="256.74" y2="417" stroke="#c6d5e6" stroke-width="1"/><line x1="263.58" y1="0" x2="263.58" y2="417" stroke="#c6d5e6" stroke-width="1"/><line x1="270.41" y1="0" x2="270.41" y2="417" stroke="#c6d5e6" stroke-width="1"/><line x1="277.25" y1="0" x2="277.25" y2="417" stroke="#c6d5e6" stroke-width="1"/><line x1="284.09" y1="0" x2="284.09" y2="417" stroke="#c6d5e6" stroke-width="1"/><line x1="290.93" y1="0" x2="290.93" y2="417" stroke="#c6d5e6" stroke-width="1"/><line x1="297.76" y1="0" x2="297.76" y2="417" stroke="#c6d5e6" stroke-width="1"/><line x1="304.60" y1="0" x2="304.60" y2="417" stroke="#c6d5e6" stroke-width="1"/><line x1="311.44" y1="0" x2="311.44" y2="417" stroke="#c6d5e6" stroke-width="1"/><line x1="318.28" y1="0" x2="318.28" y2="417" stroke="#c6d5e6" stroke-width="1"/><line x1="325.11" y1="0" x2="325.11" y2="417" stroke="#c6d5e6" stroke-width="1"/><line x1="331.95" y1="0" x2="331.95" y2="417" stroke="#c6d5e6" stroke-width="1"/><line x1="338.79" y1="0" x2="338.79" y2="417" stroke="#c6d5e6" stroke-width="1"/><line x1="345.63" y1="0" x2="345.63" y2="417" stroke="#c6d5e6" stroke-width="1"/><line x1="352.46" y1="0" x2="352.46" y2="417" stroke="#c6d5e6" stroke-width="1"/><line x1="359.30" y1="0" x2="359.30" y2="417" stroke="#9db6d0" stroke-width="1.2"/><line x1="366.14" y1="0" x2="366.14" y2="417" stroke="#c6d5e6" stroke-width="1"/><line x1="372.98" y1="0" x2="372.98" y2="417" stroke="#c6d5e6" stroke-width="1"/><line x1="379.81" y1="0" x2="379.81" y2="417" stroke="#c6d5e6" stroke-width="1"/><line x1="386.65" y1="0" x2="386.65" y2="417" stroke="#c6d5e6" stroke-width="1"/><line x1="393.49" y1="0" x2="393.49" y2="417" stroke="#c6d5e6" stroke-width="1"/><line x1="400.33" y1="0" x2="400.33" y2="417" stroke="#c6d5e6" stroke-width="1"/><line x1="407.16" y1="0" x2="407.16" y2="417" stroke="#c6d5e6" stroke-width="1"/><line x1="414.00" y1="0" x2="414.00" y2="417" stroke="#c6d5e6" stroke-width="1"/><line x1="420.84" y1="0" x2="420.84" y2="417" stroke="#c6d5e6" stroke-width="1"/><line x1="427.68" y1="0" x2="427.68" y2="417" stroke="#c6d5e6" stroke-width="1"/><line x1="434.51" y1="0" x2="434.51" y2="417" stroke="#c6d5e6" stroke-width="1"/><line x1="441.35" y1="0" x2="441.35" y2="417" stroke="#c6d5e6" stroke-width="1"/><line x1="448.19" y1="0" x2="448.19" y2="417" stroke="#c6d5e6" stroke-width="1"/><line x1="455.03" y1="0" x2="455.03" y2="417" stroke="#c6d5e6" stroke-width="1"/><line x1="461.86" y1="0" x2="461.86" y2="417" stroke="#c6d5e6" stroke-width="1"/><line x1="468.70" y1="0" x2="468.70" y2="417" stroke="#9db6d0" stroke-width="1.2"/><line x1="475.54" y1="0" x2="475.54" y2="417" stroke="#c6d5e6" stroke-width="1"/><line x1="482.38" y1="0" x2="482.38" y2="417" stroke="#c6d5e6" stroke-width="1"/><line x1="489.21" y1="0" x2="489.21" y2="417" stroke="#c6d5e6" stroke-width="1"/><line x1="496.05" y1="0" x2="496.05" y2="417" stroke="#c6d5e6" stroke-width="1"/><line x1="0" y1="7.76" x2="499" y2="7.76" stroke="#c6d5e6" stroke-width="1"/><line x1="0" y1="14.60" x2="499" y2="14.60" stroke="#c6d5e6" stroke-width="1"/><line x1="0" y1="21.44" x2="499" y2="21.44" stroke="#c6d5e6" stroke-width="1"/><line x1="0" y1="28.27" x2="499" y2="28.27" stroke="#c6d5e6" stroke-width="1"/><line x1="0" y1="35.11" x2="499" y2="35.11" stroke="#c6d5e6" stroke-width="1"/><line x1="0" y1="41.95" x2="499" y2="41.95" stroke="#c6d5e6" stroke-width="1"/><line x1="0" y1="48.79" x2="499" y2="48.79" stroke="#c6d5e6" stroke-width="1"/><line x1="0" y1="55.62" x2="499" y2="55.62" stroke="#c6d5e6" stroke-width="1"/><line x1="0" y1="62.46" x2="499" y2="62.46" stroke="#c6d5e6" stroke-width="1"/><line x1="0" y1="69.30" x2="499" y2="69.30" stroke="#9db6d0" stroke-width="1.2"/><line x1="0" y1="76.14" x2="499" y2="76.14" stroke="#c6d5e6" stroke-width="1"/><line x1="0" y1="82.97" x2="499" y2="82.97" stroke="#c6d5e6" stroke-width="1"/><line x1="0" y1="89.81" x2="499" y2="89.81" stroke="#c6d5e6" stroke-width="1"/><line x1="0" y1="96.65" x2="499" y2="96.65" stroke="#c6d5e6" stroke-width="1"/><line x1="0" y1="103.49" x2="499" y2="103.49" stroke="#c6d5e6" stroke-width="1"/><line x1="0" y1="110.32" x2="499" y2="110.32" stroke="#c6d5e6" stroke-width="1"/><line x1="0" y1="117.16" x2="499" y2="117.16" stroke="#c6d5e6" stroke-width="1"/><line x1="0" y1="124.00" x2="499" y2="124.00" stroke="#c6d5e6" stroke-width="1"/><line x1="0" y1="130.84" x2="499" y2="130.84" stroke="#c6d5e6" stroke-width="1"/><line x1="0" y1="137.67" x2="499" y2="137.67" stroke="#c6d5e6" stroke-width="1"/><line x1="0" y1="144.51" x2="499" y2="144.51" stroke="#c6d5e6" stroke-width="1"/><line x1="0" y1="151.35" x2="499" y2="151.35" stroke="#c6d5e6" stroke-width="1"/><line x1="0" y1="158.19" x2="499" y2="158.19" stroke="#c6d5e6" stroke-width="1"/><line x1="0" y1="165.02" x2="499" y2="165.02" stroke="#c6d5e6" stroke-width="1"/><line x1="0" y1="171.86" x2="499" y2="171.86" stroke="#c6d5e6" stroke-width="1"/><line x1="0" y1="178.70" x2="499" y2="178.70" stroke="#9db6d0" stroke-width="1.2"/><line x1="0" y1="185.54" x2="499" y2="185.54" stroke="#c6d5e6" stroke-width="1"/><line x1="0" y1="192.37" x2="499" y2="192.37" stroke="#c6d5e6" stroke-width="1"/><line x1="0" y1="199.21" x2="499" y2="199.21" stroke="#c6d5e6" stroke-width="1"/><line x1="0" y1="206.05" x2="499" y2="206.05" stroke="#c6d5e6" stroke-width="1"/><line x1="0" y1="212.89" x2="499" y2="212.89" stroke="#c6d5e6" stroke-width="1"/><line x1="0" y1="219.72" x2="499" y2="219.72" stroke="#c6d5e6" stroke-width="1"/><line x1="0" y1="226.56" x2="499" y2="226.56" stroke="#c6d5e6" stroke-width="1"/><line x1="0" y1="233.40" x2="499" y2="233.40" stroke="#c6d5e6" stroke-width="1"/><line x1="0" y1="240.24" x2="499" y2="240.24" stroke="#c6d5e6" stroke-width="1"/><line x1="0" y1="247.07" x2="499" y2="247.07" stroke="#c6d5e6" stroke-width="1"/><line x1="0" y1="253.91" x2="499" y2="253.91" stroke="#c6d5e6" stroke-width="1"/><line x1="0" y1="260.75" x2="499" y2="260.75" stroke="#c6d5e6" stroke-width="1"/><line x1="0" y1="267.59" x2="499" y2="267.59" stroke="#c6d5e6" stroke-width="1"/><line x1="0" y1="274.42" x2="499" y2="274.42" stroke="#c6d5e6" stroke-width="1"/><line x1="0" y1="281.26" x2="499" y2="281.26" stroke="#c6d5e6" stroke-width="1"/><line x1="0" y1="288.10" x2="499" y2="288.10" stroke="#9db6d0" stroke-width="1.2"/><line x1="0" y1="294.94" x2="499" y2="294.94" stroke="#c6d5e6" stroke-width="1"/><line x1="0" y1="301.77" x2="499" y2="301.77" stroke="#c6d5e6" stroke-width="1"/><line x1="0" y1="308.61" x2="499" y2="308.61" stroke="#c6d5e6" stroke-width="1"/><line x1="0" y1="315.45" x2="499" y2="315.45" stroke="#c6d5e6" stroke-width="1"/><line x1="0" y1="322.29" x2="499" y2="322.29" stroke="#c6d5e6" stroke-width="1"/><line x1="0" y1="329.12" x2="499" y2="329.12" stroke="#c6d5e6" stroke-width="1"/><line x1="0" y1="335.96" x2="499" y2="335.96" stroke="#c6d5e6" stroke-width="1"/><line x1="0" y1="342.80" x2="499" y2="342.80" stroke="#c6d5e6" stroke-width="1"/><line x1="0" y1="349.64" x2="499" y2="349.64" stroke="#c6d5e6" stroke-width="1"/><line x1="0" y1="356.47" x2="499" y2="356.47" stroke="#c6d5e6" stroke-width="1"/><line x1="0" y1="363.31" x2="499" y2="363.31" stroke="#c6d5e6" stroke-width="1"/><line x1="0" y1="370.15" x2="499" y2="370.15" stroke="#c6d5e6" stroke-width="1"/><line x1="0" y1="376.99" x2="499" y2="376.99" stroke="#c6d5e6" stroke-width="1"/><line x1="0" y1="383.82" x2="499" y2="383.82" stroke="#c6d5e6" stroke-width="1"/><line x1="0" y1="390.66" x2="499" y2="390.66" stroke="#c6d5e6" stroke-width="1"/><line x1="0" y1="397.50" x2="499" y2="397.50" stroke="#9db6d0" stroke-width="1.2"/><line x1="0" y1="404.34" x2="499" y2="404.34" stroke="#c6d5e6" stroke-width="1"/><line x1="0" y1="411.17" x2="499" y2="411.17" stroke="#c6d5e6" stroke-width="1"/><path d="M154.5 20.0 L346.0 20.0 L346.0 34.0 L154.5 34.0Z" fill="url(#gsteel)"/><path d="M115.0 34.0 L385.0 34.0 L387.0 37.0 L387.0 53.0 L113.0 53.0 L113.0 37.0Z" fill="url(#gsteel)"/><path d="M113.0 53.0 L387.0 53.0 L371.0 61.5 L129.0 61.5Z" fill="url(#gdark)"/><path d="M129.0 61.5 L371.0 61.5 L371.0 74.0 L129.0 74.0Z" fill="url(#gsteel)"/><path d="M129.0 74.0 L371.0 74.0 L387.0 83.0 L113.0 83.0Z" fill="url(#gdark)"/><path d="M113.0 83.0 L387.0 83.0 L387.0 96.0 L384.0 99.0 L116.0 99.0 L113.0 96.0Z" fill="url(#gsteel)"/><path d="M116.0 99.0 L384.0 99.0 L351.0 102.0 L346.0 108.0 L154.5 108.0 L149.0 102.0Z" fill="url(#gdark)"/><path d="M154.5 108.0 L346.0 108.0 L346.0 154.0 L154.5 154.0Z" fill="url(#gsteel)"/><path d="M154.5 154.0 L346.0 154.0 L336.0 164.0 L164.0 164.0Z" fill="url(#gdark)"/><path d="M164.0 164.0 L336.0 164.0 L336.0 183.5 L164.0 183.5Z" fill="url(#gsteel)"/><path d="M142.3 183.5 L357.6 183.5 L357.6 275.0 L142.3 275.0Z" fill="url(#gsteel)"/><path d="M142.3 275.0 L357.6 275.0 L332.5 290.5 L168.0 290.5Z" fill="url(#gdark)"/><path d="M233.0 290.5 L267.0 290.5 L267.0 397.5 L233.0 397.5Z" fill="url(#gshank)"/><path d="M233.0 290.5 L267.0 290.5 L267.0 303.0 L233.0 303.0Z" fill="rgba(0,0,0,0.35)"/><rect x="0.5" y="0.5" width="498" height="416" fill="none" stroke="#a9a9a9"/></svg>
<div class="a" style="left:1611px;top:1009px;width:136px;height:40px;border-radius:7px;background:linear-gradient(#6cb0f9,#1f7ff8);border:1px solid #2f85ee"></div>
<div class="t" style="left:1611px;width:136px;text-align:center;top:1011px;color:#fff;letter-spacing:0.5px">OK</div>
<div class="a" style="left:1761px;top:1009px;width:192px;height:40px;border-radius:7px;background:#fff;border:1px solid #c9c9c9;box-shadow:0 1px 1px rgba(0,0,0,0.18)"></div>
<div class="t" style="left:1791.5px;top:1011px;color:#000;letter-spacing:0.6px">Abbrechen</div>
</body></html>
